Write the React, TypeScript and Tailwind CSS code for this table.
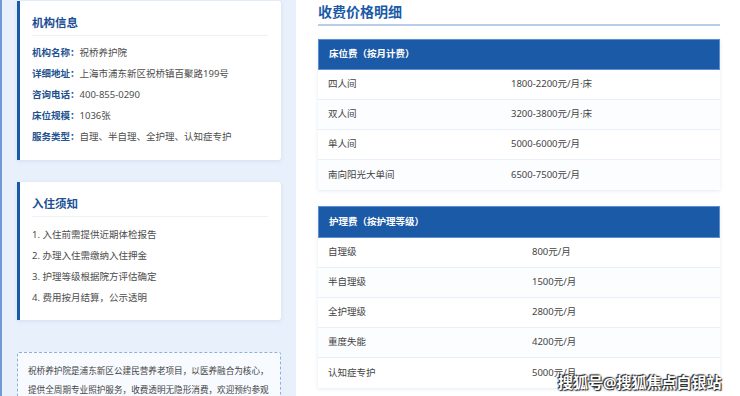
import React from "react";

const font = { fontFamily: '"Noto Sans", "Noto Sans CJK SC", sans-serif' };

const info = [
  ["机构名称：", "祝桥养护院"],
  ["详细地址：", "上海市浦东新区祝桥镇百聚路199号"],
  ["咨询电话：", "400-855-0290"],
  ["床位规模：", "1036张"],
  ["服务类型：", "自理、半自理、全护理、认知症专护"],
];

const notes = [
  "1. 入住前需提供近期体检报告",
  "2. 办理入住需缴纳入住押金",
  "3. 护理等级根据院方评估确定",
  "4. 费用按月结算，公示透明",
];

const bed = [
  ["四人间", "1800-2200元/月·床"],
  ["双人间", "3200-3800元/月·床"],
  ["单人间", "5000-6000元/月"],
  ["南向阳光大单间", "6500-7500元/月"],
];

const care = [
  ["自理级", "800元/月"],
  ["半自理级", "1500元/月"],
  ["全护理级", "2800元/月"],
  ["重度失能", "4200元/月"],
  ["认知症专护", "5000元/月"],
];

function PriceTable({
  title,
  rows,
  col,
  headH,
}: {
  title: string;
  rows: string[][];
  col: string;
  headH: string;
}) {
  return (
    <div className="shadow-[0_1px_4px_rgba(30,80,150,0.12)] bg-white">
      <div
        className={`${headH} bg-[#1b5aa7] border border-[#5d8fd0] flex items-center px-[10px] text-white text-[9.5px] font-bold`}
      >
        {title}
      </div>
      {rows.map(([a, b], i) => (
        <div
          key={i}
          className={`h-[30px] flex items-center px-[10px] text-[9.5px] text-[#444] ${
            i < rows.length - 1 ? "border-b border-[#e9eff8]" : ""
          } ${i % 2 === 1 ? "bg-[#fcfdff]" : "bg-white"}`}
        >
          <div className={col}>{a}</div>
          <div>{b}</div>
        </div>
      ))}
    </div>
  );
}

export default function App() {
  return (
    <div
      className="relative w-[740px] h-[396px] overflow-hidden flex bg-white"
      style={font}
    >
      <aside className="w-[296px] h-full bg-[#e8f0fb] border-l-2 border-[#6f9ad6] pl-[15px] pr-[15px] pt-[1px] flex flex-col">
        <div className="bg-white border-l-[3px] border-[#1b5aa7] rounded-r-[3px] shadow-[0_1px_4px_rgba(30,80,150,0.1)] pl-[12px] pr-[13px] pt-[13px] pb-[12px]">
          <div className="text-[11.5px] font-bold text-[#1b4f93] leading-[17px] pb-[4px] border-b border-[#eef1f5]">
            机构信息
          </div>
          <div className="mt-[7px]">
            {info.map(([k, v]) => (
              <div key={k} className="h-[21px] flex items-center text-[9.5px]">
                <span className="font-bold text-[#24528f]">{k}</span>
                <span className="text-[#4d4d4d]">{v}</span>
              </div>
            ))}
          </div>
        </div>

        <div className="mt-[22px] bg-white border-l-[3px] border-[#1b5aa7] rounded-r-[3px] shadow-[0_1px_4px_rgba(30,80,150,0.1)] pl-[12px] pr-[13px] pt-[13px] pb-[11px]">
          <div className="text-[11.5px] font-bold text-[#1b4f93] leading-[17px] pb-[4px] border-b border-[#eef1f5]">
            入住须知
          </div>
          <div className="mt-[8px]">
            {notes.map((n) => (
              <div key={n} className="h-[21px] flex items-center text-[9.5px] text-[#4d4d4d]">
                {n}
              </div>
            ))}
          </div>
        </div>

        <div className="mt-[32px] bg-[#f7faff] border border-dashed border-[#8fb0dd] rounded-[2px] px-[10px] pt-[9px] text-[8.6px] leading-[19px] text-[#444] whitespace-nowrap">
          <div>祝桥养护院是浦东新区公建民营养老项目，以医养融合为核心，</div>
          <div>提供全周期专业照护服务，收费透明无隐形消费，欢迎预约参观</div>
        </div>
      </aside>

      <main className="flex-1 pl-[22px] pr-[20px] pt-[2px]">
        <div className="text-[14px] font-bold text-[#1b5aa7] leading-[20px] pb-[2px] border-b-2 border-[#b8cde8]">
          收费价格明细
        </div>
        <div className="mt-[13px]">
          <PriceTable title="床位费（按月计费）" rows={bed} col="w-[183px]" headH="h-[31px]" />
        </div>
        <div className="mt-[16px]">
          <PriceTable title="护理费（按护理等级）" rows={care} col="w-[204px]" headH="h-[32px]" />
        </div>
      </main>

      <div className="absolute left-[558px] top-[371px] text-[15px] leading-[22px] font-bold text-white [text-shadow:0_0_2px_#222,1px_1px_1px_#222,-1px_-1px_1px_#222]">
        搜狐号@搜狐焦点白银站
      </div>
    </div>
  );
}
